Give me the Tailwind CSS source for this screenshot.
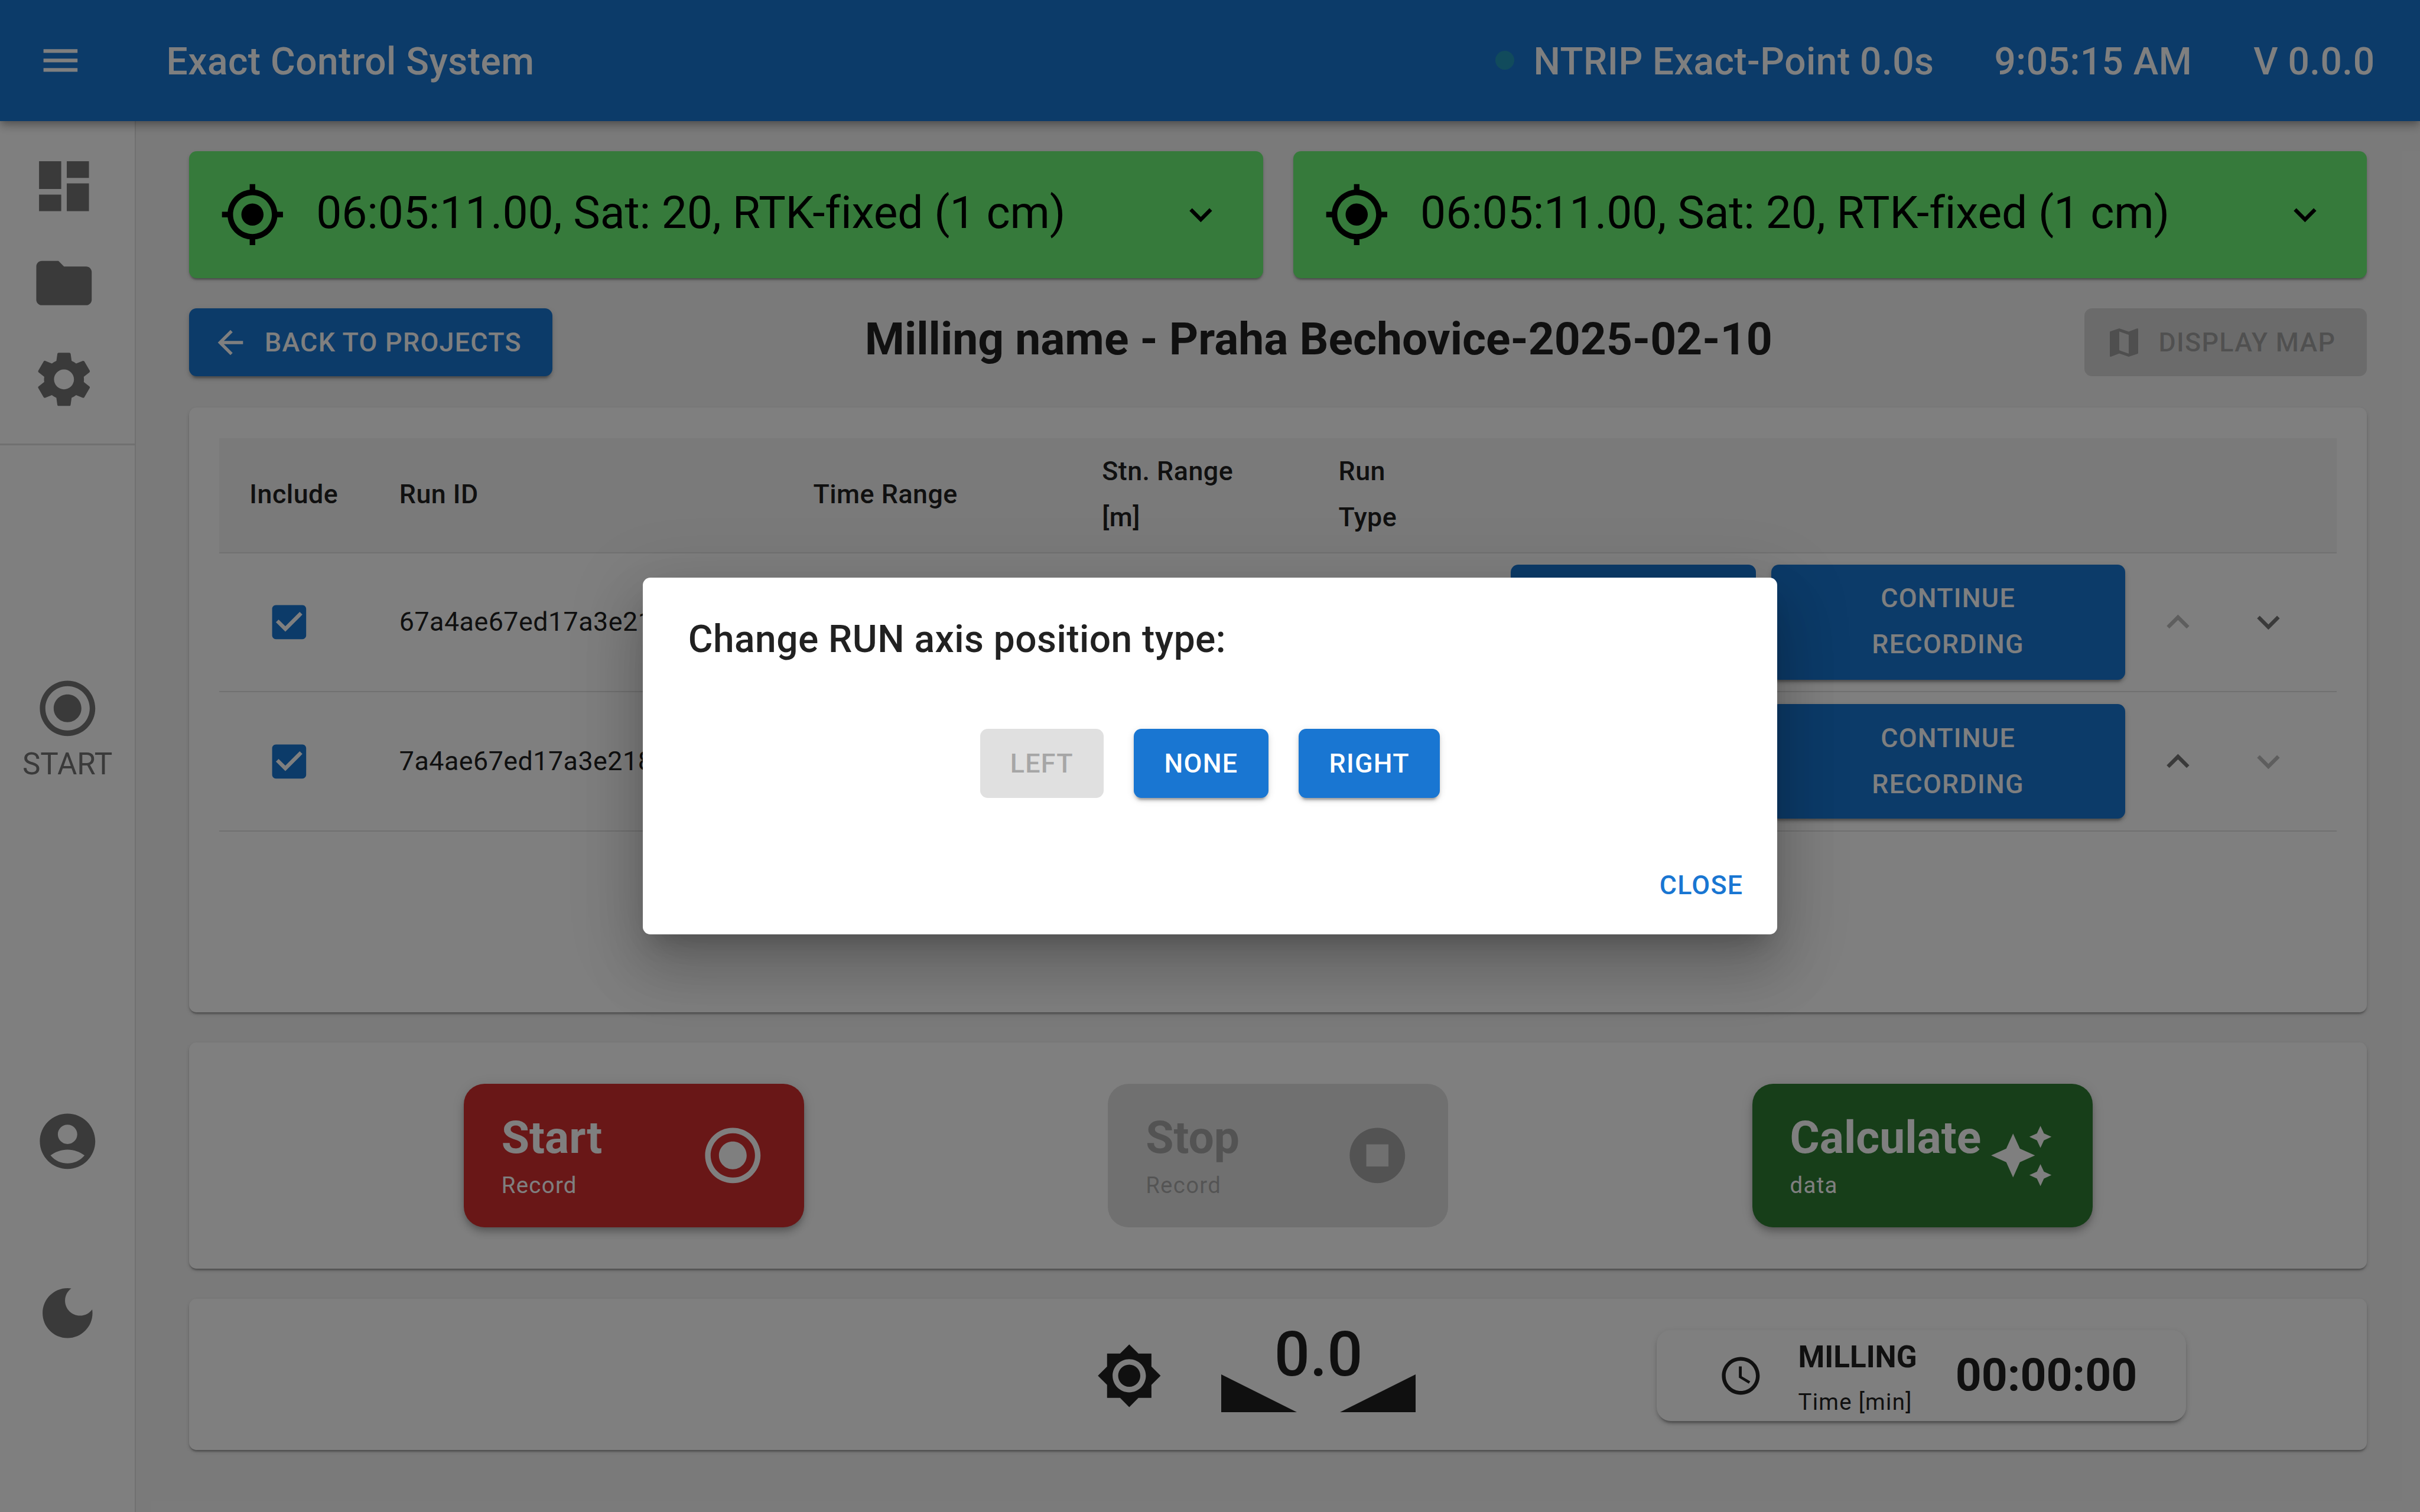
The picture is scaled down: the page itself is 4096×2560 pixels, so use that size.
<!DOCTYPE html>
<html lang="en">
<head>
<meta charset="utf-8">
<title>Exact Control System</title>
<script src="https://cdn.jsdelivr.net/npm/@tailwindcss/browser@4"></script>
</head>
<body class="m-0 overflow-hidden bg-[#f5f5f5] font-['Roboto',sans-serif] text-[#212121]">
<div class="relative w-[4096px] h-[2560px] flex flex-col overflow-hidden">

  <header class="relative z-10 h-[204.8px] shrink-0 flex items-center bg-[#1976d2] text-white pl-[64px] pr-[76.5px] text-[64px] font-medium tracking-[0.0075em] shadow-[0_5px_10px_-3px_rgba(0,0,0,0.2),0_10px_13px_0_rgba(0,0,0,0.14),0_3px_26px_0_rgba(0,0,0,0.12)]">
    <svg viewBox="0 0 24 24" class="w-[76.8px] h-[76.8px] fill-current"><path d="M3 18h18v-2H3v2zm0-5h18v-2H3v2zm0-7v2h18V6H3z"/></svg>
    <div class="ml-[140.8px] pt-[5px]">Exact Control System</div>
    <div class="ml-auto flex items-center">
      <span class="w-[32px] h-[32px] rounded-full bg-[#2eb8a0]/50"></span>
      <span class="ml-[33px] pt-[5px]">NTRIP Exact-Point 0.0s</span>
      <span class="ml-[102px] pt-[5px]">9:05:15 AM</span>
      <span class="ml-[104px] pt-[5px]">V 0.0.0</span>
    </div>
  </header>

  <div class="flex flex-1 min-h-0">
    <aside class="w-[230.4px] shrink-0 flex flex-col bg-white border-r-[2.56px] border-[#e0e0e0] text-[#757575]">
      <div class="flex flex-col items-center pr-[12px] pt-[54px] gap-[51.2px]">
        <svg viewBox="0 0 24 24" class="w-[112.64px] h-[112.64px] fill-current"><path d="M3 13h8V3H3v10zm0 8h8v-6H3v6zm10 0h8V11h-8v10zm0-18v6h8V3h-8z"/></svg>
        <svg viewBox="0 0 24 24" class="w-[112.64px] h-[112.64px] fill-current"><path d="M10 4H4c-1.1 0-1.99.9-1.99 2L2 18c0 1.1.9 2 2 2h16c1.1 0 2-.9 2-2V8c0-1.1-.9-2-2-2h-8l-2-2z"/></svg>
        <svg viewBox="0 0 24 24" class="w-[112.64px] h-[112.64px] fill-current"><path d="M19.14 12.94c.04-.3.06-.61.06-.94 0-.32-.02-.64-.07-.94l2.03-1.58c.18-.14.23-.41.12-.61l-1.92-3.32c-.12-.22-.37-.29-.59-.22l-2.39.96c-.5-.38-1.03-.7-1.62-.94l-.36-2.54c-.04-.24-.24-.41-.48-.41h-3.84c-.24 0-.43.17-.47.41l-.36 2.54c-.59.24-1.13.57-1.62.94l-2.39-.96c-.22-.08-.47 0-.59.22L2.74 8.87c-.12.21-.08.47.12.61l2.03 1.58c-.05.3-.09.63-.09.94s.02.64.07.94l-2.03 1.58c-.18.14-.23.41-.12.61l1.92 3.32c.12.22.37.29.59.22l2.39-.96c.5.38 1.03.7 1.62.94l.36 2.54c.05.24.24.41.48.41h3.84c.24 0 .44-.17.47-.41l.36-2.54c.59-.24 1.13-.56 1.62-.94l2.39.96c.22.08.47 0 .59-.22l1.92-3.32c.12-.22.07-.47-.12-.61l-2.01-1.58zM12 15.6c-1.98 0-3.6-1.62-3.6-3.6s1.62-3.6 3.6-3.6 3.6 1.62 3.6 3.6-1.62 3.6-3.6 3.6z"/></svg>
      </div>
      <div class="mt-[52px] h-[2.56px] bg-[#e0e0e0]"></div>
      <div class="flex flex-col items-center">
        <svg viewBox="0 0 24 24" class="mt-[389px] w-[112.64px] h-[112.64px] fill-current"><path d="M12 7c-2.76 0-5 2.24-5 5s2.24 5 5 5 5-2.24 5-5-2.24-5-5-5zm0-5C6.48 2 2 6.48 2 12s4.48 10 10 10 10-4.48 10-10S17.52 2 12 2zm0 18c-4.42 0-8-3.58-8-8s3.58-8 8-8 8 3.58 8 8-3.58 8-8 8z"/></svg>
        <div class="mt-[13px] text-[51.2px] leading-none">START</div>
        <svg viewBox="0 0 24 24" class="mt-[557px] w-[112.64px] h-[112.64px] fill-current"><path d="M12 2C6.48 2 2 6.48 2 12s4.48 10 10 10 10-4.48 10-10S17.52 2 12 2zm0 4c1.93 0 3.5 1.57 3.5 3.5S13.93 13 12 13s-3.5-1.57-3.5-3.5S10.07 6 12 6zm0 14c-2.03 0-4.43-.82-6.14-2.88C7.55 15.8 9.68 15 12 15s4.45.8 6.14 2.12C16.43 19.18 14.03 20 12 20z"/></svg>
        <svg viewBox="0 0 24 24" class="mt-[178px] w-[112.64px] h-[112.64px] fill-current"><path d="M12 3c-4.97 0-9 4.03-9 9s4.03 9 9 9 9-4.03 9-9c0-.46-.04-.92-.1-1.36-.98 1.37-2.58 2.26-4.4 2.26-2.98 0-5.4-2.42-5.4-5.4 0-1.81.89-3.42 2.26-4.4-.44-.06-.9-.1-1.36-.1z"/></svg>
      </div>
    </aside>

    <main class="flex-1 min-w-0 flex flex-col pt-[51.2px] px-[89.6px]">
      <!-- GNSS status -->
      <div class="flex gap-[51.2px]">
        <div class="flex-1 h-[215px] flex items-center rounded-[12.8px] bg-[#6cf476] text-black pl-[51.2px] pr-[66.6px] shadow-[0_5px_3px_-3px_rgba(0,0,0,0.2),0_3px_3px_0_rgba(0,0,0,0.14),0_3px_8px_0_rgba(0,0,0,0.12)]">
          <svg viewBox="0 0 24 24" class="w-[112.64px] h-[112.64px] fill-current"><path d="M12 8c-2.21 0-4 1.79-4 4s1.79 4 4 4 4-1.79 4-4-1.79-4-4-4zm8.94 3c-.46-4.17-3.77-7.48-7.94-7.94V1h-2v2.06C6.83 3.52 3.52 6.83 3.06 11H1v2h2.06c.46 4.17 3.77 7.48 7.94 7.94V23h2v-2.06c4.17-.46 7.48-3.77 7.94-7.94H23v-2h-2.06zM12 19c-3.87 0-7-3.13-7-7s3.13-7 7-7 7 3.13 7 7-3.13 7-7 7z"/></svg>
          <span class="ml-[51.5px] pb-[5px] text-[76.8px] tracking-[-0.14px]">06:05:11.00, Sat: 20, RTK-fixed (1 cm)</span>
          <svg viewBox="0 0 24 24" class="ml-auto w-[76.8px] h-[76.8px] fill-current"><path d="M16.59 8.59 12 13.17 7.41 8.59 6 10l6 6 6-6z"/></svg>
        </div>
        <div class="flex-1 h-[215px] flex items-center rounded-[12.8px] bg-[#6cf476] text-black pl-[51.2px] pr-[66.6px] shadow-[0_5px_3px_-3px_rgba(0,0,0,0.2),0_3px_3px_0_rgba(0,0,0,0.14),0_3px_8px_0_rgba(0,0,0,0.12)]">
          <svg viewBox="0 0 24 24" class="w-[112.64px] h-[112.64px] fill-current"><path d="M12 8c-2.21 0-4 1.79-4 4s1.79 4 4 4 4-1.79 4-4-1.79-4-4-4zm8.94 3c-.46-4.17-3.77-7.48-7.94-7.94V1h-2v2.06C6.83 3.52 3.52 6.83 3.06 11H1v2h2.06c.46 4.17 3.77 7.48 7.94 7.94V23h2v-2.06c4.17-.46 7.48-3.77 7.94-7.94H23v-2h-2.06zM12 19c-3.87 0-7-3.13-7-7s3.13-7 7-7 7 3.13 7 7-3.13 7-7 7z"/></svg>
          <span class="ml-[51.5px] pb-[5px] text-[76.8px] tracking-[-0.14px]">06:05:11.00, Sat: 20, RTK-fixed (1 cm)</span>
          <svg viewBox="0 0 24 24" class="ml-auto w-[76.8px] h-[76.8px] fill-current"><path d="M16.59 8.59 12 13.17 7.41 8.59 6 10l6 6 6-6z"/></svg>
        </div>
      </div>

      <!-- Title row -->
      <div class="mt-[51.2px] h-[115.2px] flex items-center justify-between">
        <div class="h-full flex items-center rounded-[12.8px] bg-[#1976d2] text-white pl-[38.4px] pr-[52.5px] text-[44.8px] font-medium tracking-[0.02857em] shadow-[0_8px_3px_-5px_rgba(0,0,0,0.2),0_5px_5px_0_rgba(0,0,0,0.14),0_3px_13px_0_rgba(0,0,0,0.12)]">
          <svg viewBox="0 0 24 24" class="w-[64px] h-[64px] fill-current"><path d="M20 11H7.83l5.59-5.59L12 4l-8 8 8 8 1.41-1.41L7.83 13H20v-2z"/></svg>
          <span class="ml-[25.5px]">BACK TO PROJECTS</span>
        </div>
        <div class="pb-[10px] text-[76.8px] font-bold text-[#212121]">Milling name - Praha Bechovice-2025-02-10</div>
        <div class="h-full flex items-center rounded-[12.8px] bg-black/12 text-black/26 pl-[34.5px] pr-[53px] text-[44.8px] font-medium tracking-[0.02857em]">
          <svg viewBox="0 0 24 24" class="w-[64px] h-[64px] fill-current"><path d="m20.5 3-.16.03L15 5.1 9 3 3.36 4.9c-.21.07-.36.25-.36.48V20.5c0 .28.22.5.5.5l.16-.03L9 18.9l6 2.1 5.64-1.9c.21-.07.36-.25.36-.48V3.5c0-.28-.22-.5-.5-.5zM15 19l-6-2.11V5l6 2.11V19z"/></svg>
          <span class="ml-[27px]">DISPLAY MAP</span>
        </div>
      </div>

      <!-- Runs table -->
      <section class="mt-[53px] h-[1023.8px] shrink-0 bg-white rounded-[12.8px] pt-[52px] px-[51.2px] text-[44.8px] leading-[1.75] tracking-[0.01071em] shadow-[0_5px_3px_-3px_rgba(0,0,0,0.2),0_3px_3px_0_rgba(0,0,0,0.14),0_3px_8px_0_rgba(0,0,0,0.12)]">
        <div class="h-[194.56px] grid grid-cols-[253.4px_700.7px_488.7px_400.4px_291.8px_1fr] pl-[51.2px] pb-[3px] items-center bg-[#f5f5f5] border-b-[2.56px] border-[#e0e0e0] font-medium">
          <div>Include</div>
          <div>Run ID</div>
          <div>Time Range</div>
          <div>Stn. Range<br>[m]</div>
          <div>Run<br>Type</div>
          <div></div>
        </div>
        <div class="h-[235.5px] grid grid-cols-[253.4px_700.7px_488.7px_400.4px_291.8px_1fr] pl-[51.2px] items-center border-b-[2.56px] border-[#e0e0e0]">
          <svg viewBox="0 0 24 24" class="ml-[29px] w-[76.8px] h-[76.8px] fill-[#1976d2]"><path d="M19 3H5c-1.11 0-2 .9-2 2v14c0 1.1.89 2 2 2h14c1.11 0 2-.9 2-2V5c0-1.1-.89-2-2-2zm-9 14l-5-5 1.41-1.41L10 14.17l7.59-7.59L19 8l-9 9z"/></svg>
          <div class="whitespace-nowrap">67a4ae67ed17a3e218</div>
          <div></div><div></div><div></div>
          <div class="flex items-center">
            <div class="w-[414.7px] h-[194.56px] rounded-[12.8px] bg-[#1976d2]"></div>
            <div class="ml-[25.6px] w-[599px] h-[194.56px] pb-[3px] flex items-center justify-center text-center rounded-[12.8px] bg-[#1976d2] text-white font-medium tracking-[0.02857em] shadow-[0_8px_3px_-5px_rgba(0,0,0,0.2),0_5px_5px_0_rgba(0,0,0,0.14),0_3px_13px_0_rgba(0,0,0,0.12)]">CONTINUE<br>RECORDING</div>
            <svg viewBox="0 0 24 24" class="ml-[51.2px] w-[76.8px] h-[76.8px] fill-[#bdbdbd]"><path d="m12 8-6 6 1.41 1.41L12 10.83l4.59 4.58L18 14z"/></svg>
            <svg viewBox="0 0 24 24" class="ml-[76.8px] w-[76.8px] h-[76.8px] fill-[#757575]"><path d="M16.59 8.59 12 13.17 7.41 8.59 6 10l6 6 6-6z"/></svg>
          </div>
        </div>
        <div class="h-[235.5px] grid grid-cols-[253.4px_700.7px_488.7px_400.4px_291.8px_1fr] pl-[51.2px] items-center border-b-[2.56px] border-[#e0e0e0]">
          <svg viewBox="0 0 24 24" class="ml-[29px] w-[76.8px] h-[76.8px] fill-[#1976d2]"><path d="M19 3H5c-1.11 0-2 .9-2 2v14c0 1.1.89 2 2 2h14c1.11 0 2-.9 2-2V5c0-1.1-.89-2-2-2zm-9 14l-5-5 1.41-1.41L10 14.17l7.59-7.59L19 8l-9 9z"/></svg>
          <div class="whitespace-nowrap">7a4ae67ed17a3e218</div>
          <div></div><div></div><div></div>
          <div class="flex items-center">
            <div class="w-[414.7px] h-[194.56px] rounded-[12.8px] bg-[#1976d2]"></div>
            <div class="ml-[25.6px] w-[599px] h-[194.56px] flex items-center justify-center text-center rounded-[12.8px] bg-[#1976d2] text-white font-medium tracking-[0.02857em] shadow-[0_8px_3px_-5px_rgba(0,0,0,0.2),0_5px_5px_0_rgba(0,0,0,0.14),0_3px_13px_0_rgba(0,0,0,0.12)]">CONTINUE<br>RECORDING</div>
            <svg viewBox="0 0 24 24" class="ml-[51.2px] w-[76.8px] h-[76.8px] fill-[#757575]"><path d="m12 8-6 6 1.41 1.41L12 10.83l4.59 4.58L18 14z"/></svg>
            <svg viewBox="0 0 24 24" class="ml-[76.8px] w-[76.8px] h-[76.8px] fill-[#bdbdbd]"><path d="M16.59 8.59 12 13.17 7.41 8.59 6 10l6 6 6-6z"/></svg>
          </div>
        </div>
      </section>

      <!-- Record controls -->
      <section class="mt-[51.2px] h-[382.7px] shrink-0 flex items-center justify-center gap-[514.4px] bg-white rounded-[12.8px] shadow-[0_5px_3px_-3px_rgba(0,0,0,0.2),0_3px_3px_0_rgba(0,0,0,0.14),0_3px_8px_0_rgba(0,0,0,0.12)]">
        <div class="w-[576px] h-[243.2px] shrink-0 flex items-center justify-between pl-[64px] pr-[64px] rounded-[35px] bg-[#d32f2f] text-white shadow-[0_5px_10px_-3px_rgba(0,0,0,0.2),0_10px_13px_0_rgba(0,0,0,0.14),0_3px_26px_0_rgba(0,0,0,0.12)]">
          <div class="flex flex-col">
            <span class="text-[76.8px] leading-[100px] font-bold">Start</span>
            <span class="text-[38.4px] leading-[61.4px] tracking-[0.0333em]">Record</span>
          </div>
          <svg viewBox="0 0 24 24" class="w-[112.64px] h-[112.64px] fill-current"><path d="M12 7c-2.76 0-5 2.24-5 5s2.24 5 5 5 5-2.24 5-5-2.24-5-5-5zm0-5C6.48 2 2 6.48 2 12s4.48 10 10 10 10-4.48 10-10S17.52 2 12 2zm0 18c-4.42 0-8-3.58-8-8s3.58-8 8-8 8 3.58 8 8-3.58 8-8 8z"/></svg>
        </div>
        <div class="w-[576px] h-[243.2px] shrink-0 flex items-center justify-between pl-[64px] pr-[64px] rounded-[35px] bg-black/12 text-black/26">
          <div class="flex flex-col">
            <span class="text-[76.8px] leading-[100px] font-bold">Stop</span>
            <span class="text-[38.4px] leading-[61.4px] tracking-[0.0333em]">Record</span>
          </div>
          <svg viewBox="0 0 24 24" class="w-[112.64px] h-[112.64px] fill-current"><path d="M12 2C6.48 2 2 6.48 2 12s4.48 10 10 10 10-4.48 10-10S17.52 2 12 2zm4 14H8V8h8v8z"/></svg>
        </div>
        <div class="w-[576px] h-[243.2px] shrink-0 flex items-center justify-between pl-[64px] pr-[64px] rounded-[35px] bg-[#2e7d32] text-white shadow-[0_5px_10px_-3px_rgba(0,0,0,0.2),0_10px_13px_0_rgba(0,0,0,0.14),0_3px_26px_0_rgba(0,0,0,0.12)]">
          <div class="flex flex-col">
            <span class="text-[76.8px] leading-[100px] font-bold">Calculate</span>
            <span class="text-[38.4px] leading-[61.4px] tracking-[0.0333em]">data</span>
          </div>
          <svg viewBox="0 0 44 44" class="w-[112.64px] h-[112.64px] fill-current"><polygon points="16.5,7.5 21,17.5 31,22 21,26.5 16.5,36.5 12,26.5 2,22 12,17.5"/><polygon points="34.6,2.4 36.9,7.4 41.9,9.7 36.9,12 34.6,17 32.3,12 27.3,9.7 32.3,7.4"/><polygon points="34.6,27.7 36.9,32.7 41.9,35 36.9,37.3 34.6,42.3 32.3,37.3 27.3,35 32.3,32.7"/></svg>
        </div>
      </section>

      <!-- Status -->
      <section class="mt-[51px] h-[256px] shrink-0 flex items-center pl-[1534.7px] pt-[4px] bg-white rounded-[12.8px] text-[#212121] shadow-[0_5px_3px_-3px_rgba(0,0,0,0.2),0_3px_3px_0_rgba(0,0,0,0.14),0_3px_8px_0_rgba(0,0,0,0.12)]">
        <svg viewBox="0 0 24 24" class="w-[112.64px] h-[112.64px] fill-current"><path d="M20 8.69V4h-4.69L12 .69 8.69 4H4v4.69L.69 12 4 15.31V20h4.69L12 23.31 15.31 20H20v-4.69L23.31 12 20 8.69zM12 18c-3.31 0-6-2.69-6-6s2.69-6 6-6 6 2.69 6 6-2.69 6-6 6zm0-10c-2.21 0-4 1.79-4 4s1.79 4 4 4 4-1.79 4-4-1.79-4-4-4z"/></svg>
        <div class="ml-[100px] mb-[24px] w-[328.7px] flex flex-col items-center">
          <div class="text-[106px] leading-[100px] font-medium">0.0</div>
          <div class="-mt-[15.5px] w-full flex justify-between">
            <svg viewBox="0 0 50 25" class="w-[128px] h-[64px] fill-current"><polygon points="0,0 50,25 0,25"/></svg>
            <svg viewBox="0 0 50 25" class="w-[128px] h-[64px] fill-current"><polygon points="50,0 50,25 0,25"/></svg>
          </div>
        </div>
        <div class="ml-[408px] h-[153.6px] w-[895.6px] flex items-center pl-[103.7px] rounded-[24px] bg-white shadow-[0_8px_3px_-5px_rgba(0,0,0,0.2),0_5px_5px_0_rgba(0,0,0,0.14),0_3px_13px_0_rgba(0,0,0,0.12)]">
          <svg viewBox="0 0 24 24" class="w-[76.8px] h-[76.8px] fill-current"><path d="M11.99 2C6.47 2 2 6.48 2 12s4.47 10 9.99 10C17.52 22 22 17.52 22 12S17.52 2 11.99 2zM12 20c-4.42 0-8-3.58-8-8s3.58-8 8-8 8 3.58 8 8-3.58 8-8 8zm.5-13H11v6l5.25 3.15.75-1.23-4.5-2.67z"/></svg>
          <div class="ml-[59px] flex flex-col">
            <span class="text-[51.2px] leading-[90px] font-bold">MILLING</span>
            <span class="text-[38.4px] leading-[62px] tracking-[0.0333em]">Time [min]</span>
          </div>
          <div class="ml-[65px] text-[76.8px] font-bold">00:00:00</div>
        </div>
      </section>
    </main>
  </div>

  <!-- Modal backdrop -->
  <div class="absolute inset-0 z-20 bg-black/50 flex items-center justify-center">
    <div class="w-[1920px] h-[604px] flex flex-col bg-white rounded-[12.8px] text-[#212121] shadow-[0_28px_38px_-18px_rgba(0,0,0,0.2),0_61px_97px_8px_rgba(0,0,0,0.14),0_23px_118px_20px_rgba(0,0,0,0.12)]">
      <h2 class="mt-[53.8px] ml-[76.8px] text-[64px] leading-[102.4px] font-medium tracking-[0.0075em]">Change RUN axis position type:</h2>
      <div class="mt-[99.8px] flex justify-center gap-[51.2px] text-[44.8px] font-medium tracking-[0.02857em]">
        <div class="w-[209px] h-[116.5px] flex items-center justify-center rounded-[12.8px] bg-[#e0e0e0] text-[#a6a6a6]">LEFT</div>
        <div class="w-[228px] h-[116.5px] flex items-center justify-center rounded-[12.8px] bg-[#1976d2] text-white shadow-[0_8px_3px_-5px_rgba(0,0,0,0.2),0_5px_5px_0_rgba(0,0,0,0.14),0_3px_13px_0_rgba(0,0,0,0.12)]">NONE</div>
        <div class="w-[239px] h-[116.5px] flex items-center justify-center rounded-[12.8px] bg-[#1976d2] text-white shadow-[0_8px_3px_-5px_rgba(0,0,0,0.2),0_5px_5px_0_rgba(0,0,0,0.14),0_3px_13px_0_rgba(0,0,0,0.12)]">RIGHT</div>
      </div>
      <div class="mt-auto mb-[26px] mr-[57.6px] h-[115.2px] flex items-center justify-end text-[44.8px] font-medium tracking-[0.02857em] text-[#1976d2]">CLOSE</div>
    </div>
  </div>
</div>
</body>
</html>
